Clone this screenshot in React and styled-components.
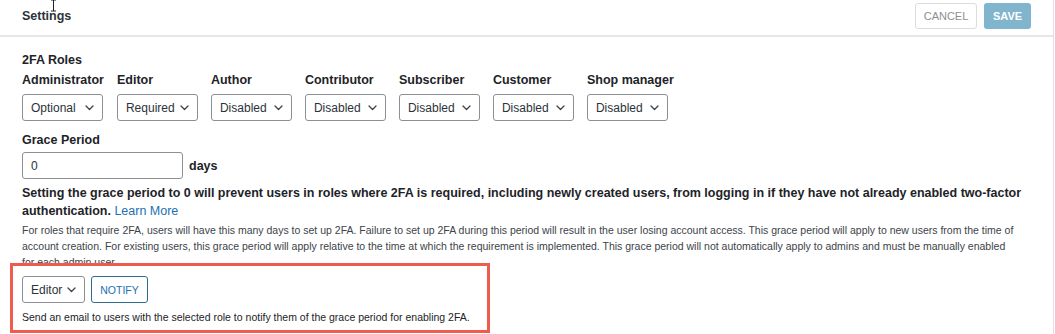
import React from 'react';
import styled, { createGlobalStyle } from 'styled-components';

const GlobalStyle = createGlobalStyle`
  body {
    margin: 0;
    background: #ffffff;
    font-family: 'Liberation Sans', Arial, sans-serif;
    color: #1d2327;
  }
`;

const roles = [
  { name: 'Administrator', value: 'Optional' },
  { name: 'Editor', value: 'Required' },
  { name: 'Author', value: 'Disabled' },
  { name: 'Contributor', value: 'Disabled' },
  { name: 'Subscriber', value: 'Disabled' },
  { name: 'Customer', value: 'Disabled' },
  { name: 'Shop manager', value: 'Disabled' },
];

const Chevron = () => (
  <svg width="9" height="6" viewBox="0 0 9 6" fill="none">
    <path d="M1 1l3.5 3.5L8 1" stroke="#3c434a" strokeWidth="1.3" strokeLinecap="round" strokeLinejoin="round" />
  </svg>
);

const Select = ({ value, width }) => (
  <SelectBox $width={width}>
    <span>{value}</span>
    <Chevron />
  </SelectBox>
);

const App = () => {
  return (
    <>
      <GlobalStyle />
      <Panel>
        <Header>
          <Title>Settings</Title>
          <Cursor width="7" height="13" viewBox="0 0 7 13">
            <path d="M1 1h5M3.5 1v11M1 12h5" stroke="#222" strokeWidth="1" fill="none" />
          </Cursor>
          <Actions>
            <CancelBtn>CANCEL</CancelBtn>
            <SaveBtn>SAVE</SaveBtn>
          </Actions>
        </Header>
        <Body>
          <SectionTitle>2FA Roles</SectionTitle>
          <RoleRow>
            {roles.map((r) => (
              <RoleColumn key={r.name}>
                <Label>{r.name}</Label>
                <Select value={r.value} />
              </RoleColumn>
            ))}
          </RoleRow>
          <GraceLabel>Grace Period</GraceLabel>
          <GraceRow>
            <DaysInput>0</DaysInput>
            <Label>days</Label>
          </GraceRow>
          <Warning>
            Setting the grace period to 0 will prevent users in roles where 2FA is required, including newly created
            users, from logging in if they have not already enabled two-factor authentication.{' '}
            <LearnMore>Learn More</LearnMore>
          </Warning>
          <Help>
            For roles that require 2FA, users will have this many days to set up 2FA. Failure to set up 2FA during this
            period will result in the user losing account access. This grace period will apply to new users from the
            time of account creation. For existing users, this grace period will apply relative to the time at which
            the requirement is implemented. This grace period will not automatically apply to admins and must be
            manually enabled for each admin user.
          </Help>
          <NotifySection>
            <Highlight />
            <NotifyRow>
              <Select value="Editor" width="63px" />
              <NotifyBtn>NOTIFY</NotifyBtn>
            </NotifyRow>
            <NotifyHelp>
              Send an email to users with the selected role to notify them of the grace period for enabling 2FA.
            </NotifyHelp>
          </NotifySection>
        </Body>
      </Panel>
    </>
  );
};

export default App;

const Panel = styled.div`
  width: 1053px;
  height: 334px;
  border-right: 1px solid #e2e2e2;
  overflow: hidden;
`;

const Header = styled.div`
  position: relative;
  height: 35px;
  padding: 0 22px;
  display: flex;
  align-items: center;
  justify-content: space-between;
  border-bottom: 2px solid #e6e6e6;
`;

const Title = styled.div`
  font-size: 12.5px;
  font-weight: 700;
  color: #2c3338;
  margin-top: -4px;
`;

const Cursor = styled.svg`
  position: absolute;
  left: 50px;
  top: -1px;
`;

const Actions = styled.div`
  display: flex;
  gap: 7px;
  margin-top: -4px;
`;

const CancelBtn = styled.button`
  width: 62px;
  height: 26px;
  padding: 0;
  border: 1px solid #dcdcde;
  border-radius: 3px;
  background: #fff;
  color: #8c8f94;
  font-family: inherit;
  font-size: 11px;
`;

const SaveBtn = styled.button`
  width: 47px;
  height: 26px;
  padding: 0;
  border: none;
  border-radius: 3px;
  background: #81b4cd;
  color: #fff;
  font-family: inherit;
  font-size: 11px;
  font-weight: 700;
`;

const Body = styled.div`
  padding: 14px 6px 0 22px;
`;

const SectionTitle = styled.div`
  font-size: 12.5px;
  font-weight: 700;
  line-height: 18px;
  margin-bottom: 2px;
`;

const RoleRow = styled.div`
  display: flex;
  gap: 13px;
`;

const RoleColumn = styled.div`
  display: flex;
  flex-direction: column;
  gap: 5px;
  min-width: 81px;
`;

const Label = styled.div`
  font-size: 12.5px;
  font-weight: 700;
  line-height: 18px;
  white-space: nowrap;
`;

const SelectBox = styled.div`
  box-sizing: border-box;
  width: ${({ $width }) => $width || '81px'};
  height: 27px;
  padding: 0 8px;
  display: flex;
  align-items: center;
  justify-content: space-between;
  border: 1px solid #8c8f94;
  border-radius: 3px;
  font-size: 12px;
  color: #2c3338;
  background: #fff;
`;

const GraceLabel = styled(Label)`
  margin-top: 10px;
  margin-bottom: 3px;
`;

const GraceRow = styled.div`
  display: flex;
  align-items: center;
  gap: 6px;
`;

const DaysInput = styled.div`
  box-sizing: border-box;
  width: 161px;
  height: 27px;
  padding: 0 8px;
  display: flex;
  align-items: center;
  border: 1px solid #8c8f94;
  border-radius: 3px;
  font-size: 12px;
  color: #2c3338;
`;

const Warning = styled.p`
  margin: 5px 0 2px;
  font-size: 12.5px;
  font-weight: 700;
  line-height: 18px;
  color: #1d2327;
`;

const LearnMore = styled.a`
  font-weight: 400;
  color: #2271b1;
  text-decoration: none;
`;

const Help = styled.p`
  max-width: 996px;
  margin: 0;
  font-size: 10.5px;
  line-height: 16px;
  color: #3c434a;
`;

const NotifySection = styled.div`
  position: relative;
  margin-top: 6px;
`;

const Highlight = styled.div`
  position: absolute;
  left: -12px;
  top: -13px;
  width: 480px;
  height: 70px;
  box-sizing: border-box;
  border: 3px solid #ef5b4c;
  pointer-events: none;
`;

const NotifyRow = styled.div`
  display: flex;
  gap: 6px;
`;

const NotifyBtn = styled.button`
  width: 57px;
  height: 27px;
  padding: 0;
  border: 1px solid #2c6e91;
  border-radius: 3px;
  background: #fff;
  color: #2271b1;
  font-family: inherit;
  font-size: 10.5px;
`;

const NotifyHelp = styled.p`
  margin: 6px 0 0;
  font-size: 10.5px;
  line-height: 16px;
  color: #1d2327;
`;
